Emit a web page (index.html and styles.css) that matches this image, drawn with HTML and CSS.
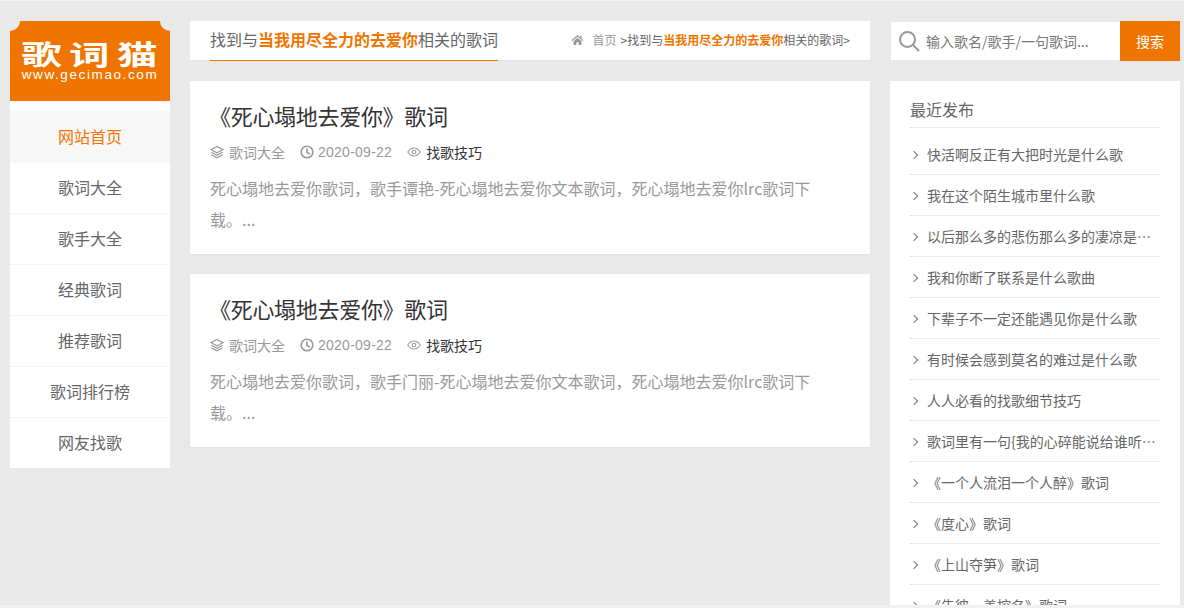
FILE: index.html
```html
<!DOCTYPE html>
<html lang="zh">
<head>
<meta charset="utf-8">
<title>歌词猫</title>
<link rel="stylesheet" href="styles.css">
</head>
<body>
<div class="page">
  <aside class="left">
    <div class="logo">
      <span class="notch notch-l"></span><span class="notch notch-r"></span>
      <div class="logo-cn">歌词猫</div>
      <div class="logo-en">www.gecimao.com</div>
    </div>
    <nav class="menu">
      <a class="active">网站首页</a>
      <a>歌词大全</a>
      <a>歌手大全</a>
      <a>经典歌词</a>
      <a>推荐歌词</a>
      <a>歌词排行榜</a>
      <a>网友找歌</a>
    </nav>
  </aside>
  <main class="main">
    <div class="topbar">
      <h2 class="heading">找到与<b>当我用尽全力的去爱你</b>相关的歌词</h2>
      <div class="crumbs">
        <svg class="home" viewBox="0 0 14 12" width="13" height="12"><path d="M7 0.5 0.5 6.2l1 .9L7 2.4l5.500 4.700 1-.9L11.500 4.900V1.500H10v2.100L7 .5zM2.800 7.300V11.500h3V8.500h2.400v3h3V7.300L7 3.700z" fill="#999"/></svg>
        <span class="home-link">首页</span><span class="sep">&gt;</span>找到与<b>当我用尽全力的去爱你</b>相关的歌词<span class="sep">&gt;</span>
      </div>
    </div>
    <article class="card">
      <h3 class="title">《死心塌地去爱你》歌词</h3>
      <div class="meta">
        <span class="mi"><svg viewBox="0 0 14 14" width="14" height="14" fill="none" stroke="#999" stroke-width="1.200"><path d="M7 1.500 1 4.700l6 3.200 6-3.200z"/><path d="M1.300 7.200 7 10.200l5.700-3M1.300 9.700 7 12.700l5.700-3"/></svg>歌词大全</span>
        <span class="mi"><svg viewBox="0 0 14 14" width="14" height="14" fill="none" stroke="#999" stroke-width="1.600"><circle cx="7" cy="7" r="5.800"/><path d="M7 3.500V7.500l2.800 1.500"/></svg><span class="date">2020-09-22</span></span>
        <span class="mi"><svg viewBox="0 0 14 14" width="14" height="14" fill="none" stroke="#999" stroke-width="1.100"><path d="M.8 7C2.500 4.300 4.600 3 7 3s4.500 1.300 6.200 4c-1.700 2.700-3.800 4-6.200 4S2.500 9.700.8 7z"/><circle cx="7" cy="7" r="1.800"/></svg><span class="tag">找歌技巧</span></span>
      </div>
      <p class="desc">死心塌地去爱你歌词，歌手谭艳-死心塌地去爱你文本歌词，死心塌地去爱你lrc歌词下载。...</p>
    </article>
    <article class="card">
      <h3 class="title">《死心塌地去爱你》歌词</h3>
      <div class="meta">
        <span class="mi"><svg viewBox="0 0 14 14" width="14" height="14" fill="none" stroke="#999" stroke-width="1.200"><path d="M7 1.500 1 4.700l6 3.200 6-3.200z"/><path d="M1.300 7.200 7 10.200l5.700-3M1.300 9.700 7 12.700l5.700-3"/></svg>歌词大全</span>
        <span class="mi"><svg viewBox="0 0 14 14" width="14" height="14" fill="none" stroke="#999" stroke-width="1.600"><circle cx="7" cy="7" r="5.800"/><path d="M7 3.500V7.500l2.800 1.500"/></svg><span class="date">2020-09-22</span></span>
        <span class="mi"><svg viewBox="0 0 14 14" width="14" height="14" fill="none" stroke="#999" stroke-width="1.100"><path d="M.8 7C2.500 4.300 4.600 3 7 3s4.500 1.300 6.200 4c-1.700 2.700-3.800 4-6.200 4S2.500 9.700.8 7z"/><circle cx="7" cy="7" r="1.800"/></svg><span class="tag">找歌技巧</span></span>
      </div>
      <p class="desc">死心塌地去爱你歌词，歌手门丽-死心塌地去爱你文本歌词，死心塌地去爱你lrc歌词下载。...</p>
    </article>
  </main>
  <aside class="right">
    <div class="search">
      <div class="search-box">
        <svg viewBox="0 0 22 22" width="22" height="22" fill="none" stroke="#999" stroke-width="2"><circle cx="9.500" cy="9.500" r="7.500"/><path d="M15 15l6 6"/></svg>
        <span class="placeholder">输入歌名/歌手/一句歌词...</span>
      </div>
      <div class="search-btn">搜索</div>
    </div>
    <section class="panel">
      <h4 class="panel-title">最近发布</h4>
      <ul class="list">
        <li>快活啊反正有大把时光是什么歌</li>
        <li>我在这个陌生城市里什么歌</li>
        <li>以后那么多的悲伤那么多的凄凉是什么歌</li>
        <li>我和你断了联系是什么歌曲</li>
        <li>下辈子不一定还能遇见你是什么歌</li>
        <li>有时候会感到莫名的难过是什么歌</li>
        <li>人人必看的找歌细节技巧</li>
        <li>歌词里有一句{我的心碎能说给谁听}是什么歌</li>
        <li>《一个人流泪一个人醉》歌词</li>
        <li>《度心》歌词</li>
        <li>《上山夺笋》歌词</li>
        <li>《告彼·善控名》歌词</li>
      </ul>
    </section>
  </aside>
</div>
</body>
</html>
```
FILE: styles.css
```css
* { box-sizing: border-box; }
html, body { margin: 0; height: 100%; overflow: hidden; background: #f1f1f1; }
body { font-family: "Noto Sans CJK SC", "Liberation Sans", sans-serif; color: #555; }
.page {
  height: 604px;
  margin-top: 1px;
  padding: 20px 4px 0 10px;
  background: #e9e9e9;
  display: grid;
  grid-template-columns: 160px 680px 290px;
  column-gap: 20px;
  align-items: start;
  overflow: hidden;
}
.logo {
  position: relative;
  height: 80px;
  background: #f07500;
  color: #fff;
  text-align: center;
  overflow: hidden;
}
.notch { position: absolute; top: -10px; width: 20px; height: 20px; border-radius: 50%; background: #e9e9e9; }
.notch-l { left: -10px; }
.notch-r { right: -10px; }
.logo-cn {
  font-weight: 700;
  font-size: 27px;
  letter-spacing: 4.900px;
  line-height: 30px;
  padding: 18px 0 0 4px;
  transform: scaleX(1.500);
}
.logo-en {
  font-family: "Liberation Sans", sans-serif;
  font-size: 13.500px;
  letter-spacing: 1.600px;
  line-height: 14px;
  margin-top: -1px;
}
.menu { background: #fff; padding-top: 10px; display: flex; flex-direction: column; }
.menu a {
  height: 51px;
  line-height: 49px;
  text-align: center;
  font-size: 16px;
  color: #666;
  border-bottom: 1px solid #f4f4f4;
}
.menu a:last-child { border-bottom: 0; height: 50px; }
.menu a.active { background: #f8f8f8; color: #f07500; border-bottom: 0; height: 52px; line-height: 51px; }
.main { display: flex; flex-direction: column; gap: 20px; }
.topbar {
  height: 40px;
  background: #fff;
  border-bottom: 1px solid #e2e2e2;
  padding: 0 20px;
  display: flex;
  justify-content: space-between;
  align-items: flex-start;
}
.heading {
  margin: 0;
  height: 40px;
  line-height: 37px;
  font-size: 16px;
  font-weight: 400;
  color: #666;
  border-bottom: 1px solid #f07500;
}
.heading b, .crumbs b { color: #f07500; font-weight: 700; }
.crumbs { display: flex; align-items: center; height: 37px; font-size: 12px; color: #666; }
.home { margin-right: 9px; }
.home-link { color: #999; margin-right: 4px; }
.sep { font-size: 12px; }
.card {
  background: #fff;
  padding: 18px 20px 0;
  height: 173px;
  box-shadow: 0 1px 3px rgba(0,0,0,.04);
}
.title { margin: 0 0 0 -1px; font-size: 22px; font-weight: 400; line-height: 33px; color: #333; letter-spacing: -.3px; }
.meta { display: flex; gap: 15px; margin-top: 10px; height: 20px; align-items: center; font-size: 14px; color: #999; }
.mi { display: flex; align-items: center; gap: 5px; }
.mi:nth-child(2) { gap: 4px; }
.date { font-family: "Liberation Sans", sans-serif; letter-spacing: .25px; }
.tag { color: #333; }
.desc { margin: 11px 0 0; font-size: 16px; line-height: 31px; color: #999; width: 606px; }
.search { display: flex; height: 40px; }
.search-box {
  flex: 1;
  background: #fff;
  margin: 1px 0 1px 1px;
  display: flex;
  align-items: center;
  padding-left: 7px;
  gap: 6px;
}
.placeholder { font-size: 14px; color: #777; }
.search-btn { width: 60px; background: #f07500; color: #fff; font-size: 14px; line-height: 40px; text-align: center; }
.panel { background: #fff; margin-top: 20px; padding: 12px 20px 0; height: 560px; }
.panel-title { margin: 0; font-size: 16px; font-weight: 400; line-height: 32px; height: 35px; color: #666; border-bottom: 1px dotted #ddd; }
.list { list-style: none; margin: 0; padding: 6px 0 0; }
.list li {
  position: relative;
  height: 41px;
  line-height: 41px;
  font-size: 14px;
  padding: 0 0 0 17px;
  color: #666;
  border-bottom: 1px dotted #ddd;
  white-space: nowrap;
  overflow: hidden;
  text-overflow: ellipsis;
}
.list li::before {
  content: "";
  position: absolute;
  left: 1px;
  top: 18px;
  width: 5px;
  height: 5px;
  border-top: 1px solid #777;
  border-right: 1px solid #777;
  transform: rotate(45deg);
}
```
